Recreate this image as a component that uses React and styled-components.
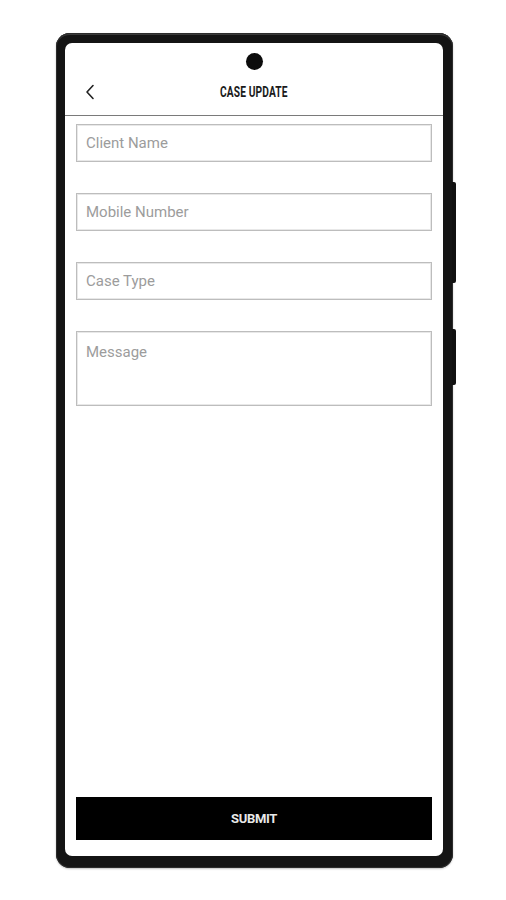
import React from 'react';
import styled, { createGlobalStyle } from 'styled-components';

const GlobalStyle = createGlobalStyle`
  html, body {
    margin: 0;
    padding: 0;
    background: #ffffff;
  }
  body {
    font-family: Roboto, 'Liberation Sans', sans-serif;
  }
`;

const Page = styled.div`
  width: 506px;
  height: 900px;
  padding: 33px 0 0 56px;
  box-sizing: border-box;
`;

const Phone = styled.div`
  position: relative;
  width: 397px;
  height: 835px;
  box-sizing: border-box;
  background: #141414;
  border-radius: 14px;
  padding: 10px 10px 12px 9px;
  box-shadow: inset 0 0 0 1px #2c2c2c, inset 0 3px 0 -1px #3a3a3a, 0 1px 2px rgba(0, 0, 0, 0.25);
`;

const SideKey = styled.div`
  position: absolute;
  right: -3px;
  top: ${p => p.top}px;
  width: 4px;
  height: ${p => p.length}px;
  background: #111;
  border-radius: 0 2px 2px 0;
`;

const Screen = styled.div`
  height: 100%;
  background: #ffffff;
  border-radius: 7px;
  display: flex;
  flex-direction: column;
  overflow: hidden;
`;

const Notch = styled.div`
  height: 31px;
  display: flex;
  justify-content: center;
  padding-top: 10px;
  box-sizing: border-box;
`;

const Camera = styled.div`
  width: 17px;
  height: 17px;
  border-radius: 50%;
  background: #0c0c0c;
`;

const Header = styled.div`
  position: relative;
  height: 42px;
  box-sizing: border-box;
  padding-top: 10px;
  border-bottom: 1px solid #7a7a7a;
  display: flex;
  justify-content: center;
`;

const Back = styled.button`
  position: absolute;
  left: 18px;
  top: 9px;
  width: 14px;
  height: 18px;
  padding: 0;
  border: none;
  background: none;
  display: flex;
  align-items: center;
  justify-content: center;
`;

const Title = styled.h1`
  margin: 0;
  font-family: Roboto, 'Liberation Sans', sans-serif;
  font-weight: 700;
  font-size: 15px;
  line-height: 16px;
  color: #1a1a1a;
  letter-spacing: 0.2px;
  transform: scaleX(0.68);
`;

const Form = styled.form`
  flex: 1;
  display: flex;
  flex-direction: column;
  padding: 8px 11px 16px;
`;

const Fields = styled.div`
  display: flex;
  flex-direction: column;
  gap: 31px;
`;

const Field = styled.input`
  height: 38px;
  box-sizing: border-box;
  border: 1px solid #bdbdbd;
  box-shadow: inset 0 0 0 1px #e8e8e8;
  padding: 0 9px;
  font-family: Roboto, 'Liberation Sans', sans-serif;
  font-size: 15px;
  color: #333;
  outline: none;

  &::placeholder {
    color: #9c9c9c;
  }
`;

const MessageField = styled.textarea`
  height: 75px;
  box-sizing: border-box;
  border: 1px solid #bdbdbd;
  box-shadow: inset 0 0 0 1px #e8e8e8;
  padding: 12px 9px;
  font-family: Roboto, 'Liberation Sans', sans-serif;
  font-size: 15px;
  line-height: 17px;
  color: #333;
  resize: none;
  outline: none;

  &::placeholder {
    color: #9c9c9c;
  }
`;

const Submit = styled.button`
  margin-top: auto;
  height: 43px;
  border: none;
  background: #000;
  color: #e8e8e8;
  font-family: Roboto, 'Liberation Sans', sans-serif;
  font-weight: 700;
  font-size: 13px;
  letter-spacing: -0.3px;
`;

export default function App() {
  return (
    <Page>
      <GlobalStyle />
      <Phone>
        <SideKey top={149} length={101} />
        <SideKey top={296} length={56} />
        <Screen>
          <Notch>
            <Camera />
          </Notch>
          <Header>
            <Back type="button" aria-label="Back">
              <svg width="10" height="16" viewBox="0 0 10 16" fill="none">
                <polyline points="8,1.5 2,8 8,14.5" stroke="#222" strokeWidth="1.6" strokeLinecap="round" strokeLinejoin="round" />
              </svg>
            </Back>
            <Title>CASE UPDATE</Title>
          </Header>
          <Form onSubmit={e => e.preventDefault()}>
            <Fields>
              <Field type="text" placeholder="Client Name" />
              <Field type="tel" placeholder="Mobile Number" />
              <Field type="text" placeholder="Case Type" />
              <MessageField placeholder="Message" />
            </Fields>
            <Submit type="submit">SUBMIT</Submit>
          </Form>
        </Screen>
      </Phone>
    </Page>
  );
}
